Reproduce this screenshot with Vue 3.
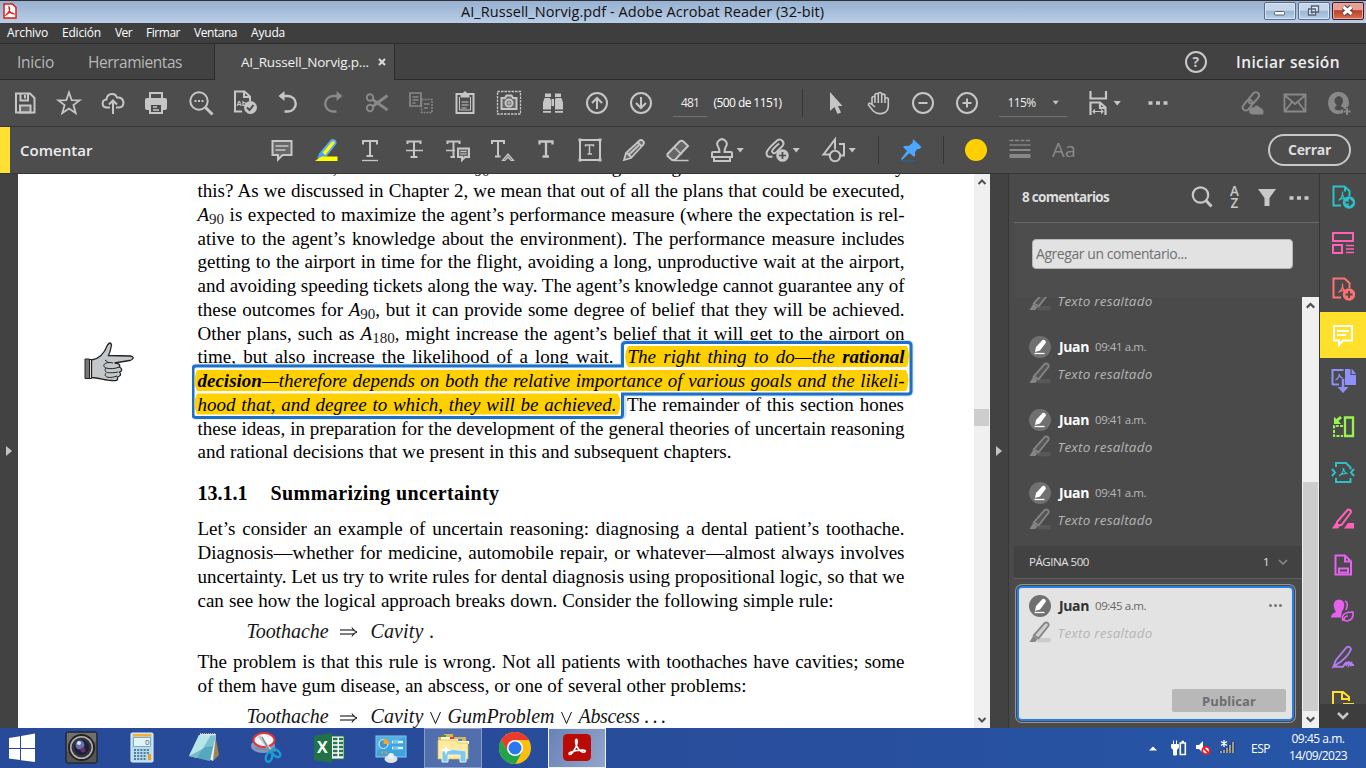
<script setup>
const vFit = {
  mounted(el, { value, modifiers }) {
    if (!value) return
    const text = el.textContent
    const natural = el.getBoundingClientRect().width
    if (modifiers.words) {
      const n = (text.match(/ /g) || []).length
      if (n) el.style.wordSpacing = (value - natural) / n + 'px'
      else el.style.letterSpacing = (value - natural) / text.length + 'px'
    } else {
      el.style.letterSpacing = (value - natural) / text.length + 'px'
    }
  }
}

// Turns left edges into the gaps that separate neighbours in a flex row.
function spaced(items, start = 0) {
  let right = start
  return items.map((it) => {
    const left = it.c !== undefined ? it.c - it.w / 2 : it.x
    const gap = left - right
    right = left + it.w
    return { ...it, gap }
  })
}
const ic = (c, icon, cls = '') => ({ c, w: 28, icon, cls })
const tx = (x, w, text, cls = '') => ({ x, w, text, cls })

const acro = '<path d="M7.500 15.500c3-2 4.500-6 4-9M11.500 9c.5 3.500 2.500 5 4.500 5M8 15c2-1.500 4-2 7-1" stroke-width="1.300"/>'
const hl = '<path d="M6 15 16 3.500c2-2 5 0 3.500 2.500L10.500 18H6Z"/><path class="f" d="M4.500 16 9 19l-2 2.500H1Z"/>'
const icons = {
  save: '<path d="M3 2.500h14l4.500 4.500v14.500H3Z"/><path d="M7.500 3v6.500H15V3M12 4v3.500"/><path class="h" d="M7 14.500h10.500v7H7Z"/>',
  star: '<path d="m12 1.500 2.700 7.700 7.900.2-6.200 4.700 2.300 8L12 17.500l-6.700 4.600 2.300-8-6.200-4.700 7.900-.2Z" stroke-width="1.800"/>',
  cloud: '<path d="M9 16.500H6c-6 0-5.500-8-.500-8C6 2 14 1 16 6.500c8-1 8.500 10 2 10h-3M12 23V10M8 13.500l4-4 4 4"/>',
  print: '<path d="M6 8V2h12V8M6 13v9h12V13Z"/><path class="f" d="M3 7h18q2 0 2 2v8q0 2-2 2h-2v-6H5v6H3q-2 0-2-2V9q0-2 2-2Z"/><path d="M9 16h4m-4 3h6" stroke-width="1.300"/>',
  zoom: '<circle cx="10" cy="10" r="8.700"/><path d="m16.500 16.500 7 7" stroke-width="3"/><path d="M5.500 10h2m1.500 0h2m1.500 0h2" stroke-width="2"/>',
  abc: '<path d="M10 20.500H3V.500h9.500L18 5.500V10M12 1v5h5.500"/><text x="4.500" y="15" font-size="7.500" class="t">Ab</text><circle class="f" cx="18.500" cy="16.500" r="6.500"/><path class="d" d="m15 16.500 2.500 2.500 4-5"/>',
  undo: '<path d="M4 5h8a7.700 7.700 0 0 1 0 15.500H8.500" stroke-width="2.400"/><path class="f" d="M2.500 5 8.500 0v10Z"/>',
  redo: '<path d="M20 5h-8a7.700 7.700 0 0 0 0 15.500H15.500" stroke-width="2.400"/><path class="f" d="m21.500 5-6-5v10Z"/>',
  cut: '<circle cx="5" cy="6.500" r="3.200"/><circle cx="5" cy="17" r="3.200"/><path d="M7.500 8.500 22.500 19M7.500 15.500 22.500 4.500" stroke-width="2.800"/>',
  copy: '<path d="M1 2h11v13H1ZM3.500 6h6m-6 3h6m-6 3h3" stroke-width="1.700"/><path d="M12.500 8.500H23v13H12.500Z" stroke-width="1.500" stroke-dasharray="2 1"/><path d="M15 13h5.500M15 17h4" stroke-width="1.300"/>',
  clip: '<path d="M3.500 3h17v19h-17Z"/><path d="M6.500 6v13h11V6" stroke-width="1"/><path class="f" d="M7.500 2H10q2-3.500 4 0h2.500v4.500h-9Z"/><path d="M8.500 11h7m-7 3h7m-7 3h5" stroke-width="1"/>',
  camera: '<path d="M.500.500h23v22.500H.500Z" stroke-width="1.300" stroke-dasharray="2.500 1"/><path class="h" d="M4.500 7H8l1.500-2.500h5L16 7h3.500v11h-15Z"/><circle cx="12" cy="12" r="3.500"/><path d="M12 10v4m-2-2h4" stroke-width="1"/>',
  find: '<path class="f" d="M4 2.500h6V6H4ZM14 2.500h6V6h-6ZM3.500 7H9l1 2.500v9H2v-7ZM14.500 7h6l1.500 4.500v7h-8v-9ZM10.500 8h2.500v7h-2.500ZM2 20h8v1.700H2ZM14 20h8v1.700h-8Z"/>',
  up: '<circle cx="12" cy="12" r="10"/><path d="M12 18V7m-5 5 5-5 5 5"/>',
  down: '<circle cx="12" cy="12" r="10"/><path d="M12 6v11m-5-5 5 5 5-5"/>',
  pointer: '<path class="f" d="M6 1v19l4.500-4 3 7 3.500-1.500-3-6.500h4.500Z"/>',
  hand: '<path d="M5 14V6.500q1.500-2 3 0V12 3.500q1.700-2 3.300 0V12 2.500q1.700-2 3.400 0V12 4q1.700-1.700 3.300 0v8-4.500q1.700-1.500 3.300 0V15c0 9-11 9-15 5L1.500 14q0-3 3-1L8 16" stroke-width="1.600"/>',
  minus: '<circle cx="12" cy="12" r="10"/><path d="M7.500 12h9"/>',
  plus: '<circle cx="12" cy="12" r="10"/><path d="M7.500 12h9M12 7.500v9"/>',
  arrow: '<path class="f" d="M8.500 10h7.500l-3.750 4.500Z"/>',
  fit: '<path d="M4.500 0v7.500H20V0M4.500 24V11.500H14l5.500 5V24M14 11.500V17h5.500" stroke-width="2.200"/><path d="M7 20.500h10m-8-2-2 2 2 2m6-4 2 2-2 2" stroke-width="1.200"/>',
  dots: '<path class="f" d="M2.500 10.300h4v3.500h-4ZM10 10.300h4v3.500h-4ZM17.500 10.300h4v3.500h-4Z"/>',
  link: '<g transform="rotate(-50 11 11)"><rect x="1" y="8" width="12" height="6.500" rx="3.200"/><rect x="10" y="8" width="13" height="6.500" rx="3.200"/></g><path class="f" d="M14 23.500q-4 0-4-4 1-4 5-3 2-4 6 0 5 2 3 7Z"/>',
  mail: '<path d="M1.500 3.500h21v17h-21ZM2 4.500l10 8.500 10-8.500M2 20l7-9m13 9-7-9" stroke-width="1.800"/>',
  person: '<path class="f" d="M16 22C6 26 1 18 1 11.500A10.500 10.500 0 0 1 22 11q0 3-1 5h-2v2h-3Z"/><path class="e" d="M8 18q-1-2 2-3.500Q6.500 11 8 7.500q4-5 7.500 0 1.500 4-2 7.500l3 1.500v2h-2q-1 2-6 0Z"/><path d="M20 17v7m-3.500-3.500h7"/>',
  help: '<circle cx="12" cy="12" r="10"/><text x="8.500" y="17" font-size="14" class="t">?</text>',
  note: '<path class="h" d="M2.500 3h19v14h-9L8 21.500V17H2.500Z"/><path d="M5.500 8h13m-13 4h10" stroke-width="1.300"/>',
  mark: '<path fill="#ffff00" stroke="#5aa9f5" d="M6 16 17 3c2-2 6 0 4 3L11 19Z"/><path fill="#4d9ff0" stroke="none" d="M3 20 7 13l6 6-4 3Z"/><path fill="#ffff00" stroke="none" d="M8 18.500h15.500V23H1l4-3Z"/>',
  tu: '<path d="M5 6.500V3h14v3.500M12 3v15M8.500 18H15"/><path d="M4 22.500h16" stroke-width="1.300"/>',
  ts: '<path d="M5.500 6V3.500h13V6M12 3.500V19M8.500 19h7"/><path d="M4 12.500h17" stroke-width="1.500"/>',
  tc: '<path d="M1.500 6V3.500h12V6M7.500 3.500V19M4.500 19H9"/><path d="M0 12.500h9" stroke-width="1.500"/><path class="h" d="M12 10.500h11v8.500h-4l-3 3V19h-4Z"/><path d="M14.500 13.500h6m-6 2.500h6" stroke-width="1"/>',
  ti: '<path d="M2 6V3h12V6M8 3v15.500M5 18.500h5.500"/><path class="h" d="m12.500 22.500 5.500-6.500 5.500 6.500h-2.500L18 19l-3 3.500Z" stroke-width="1.200"/>',
  tt: '<path d="M5.500 6.500V3.500h13v3M12 3.500v15M8.500 18.500H15" stroke-width="2.300"/>',
  tb: '<path d="M2 2h20v20H2Z"/><path d="M7.500 8.500V7h8v1.500M11.500 7v9M9.500 16H14" stroke-width="1.500"/><path class="f" d="M.500.500h3v3h-3Zm20 0h3v3h-3Zm-20 20h3v3h-3Zm20 0h3v3h-3Z"/>',
  pencil: '<path class="h" d="M2 22 4 15 17 3q2-2 4 0 2 2 0 4L9 20ZM16 4.500l4 4M5 15l4 4M6 17.500 17 7" stroke-width="1.800"/>',
  eraser: '<path class="h" d="m1.500 16 12-12.500q2-1.500 4 0L22 8l-9 9.500L9 22H6l-4.500-4Z"/><path d="m8.500 9.500 7 7M7 22.500h15.500" stroke-width="1.500"/>',
  stamp: '<path d="M9.500 14q0-3-1.500-5.500a4.700 4.700 0 1 1 8 0q-1.500 2.500-1.500 5.500H21q1 0 1 1v4H2v-4q0-1 1-1ZM4 19v4h16v-4"/>',
  attach: '<path d="M7.500 18.500q-6 1.500-6-3.500 0-3 10-12 3-3 6 0 2.500 3-1 6l-5.500 5.500q-3 2-4-1 0-2 7-8"/><circle class="f" cx="17.500" cy="17.500" r="6.300"/><path class="d" d="M17.500 14v7M14 17.500h7" stroke-width="1.700"/>',
  shapes: '<path d="M8 16.500H1.500L13 1.500v10M17 6h5v11.500h-3"/><circle cx="13" cy="18" r="5.200"/>',
  pin: '<path fill="#4ca7ff" stroke="none" d="M14 1 22.500 9l-2 2h-2L16 14q1 3-1 5l-4.500-4L3 22l-1-1 6-8-4-4q2-2 5.500-1l4-3Z"/><path fill="#385b7e" stroke="none" d="M2 22h14v1.700H2Z"/>',
  color: '<circle cx="12" cy="12" r="11" fill="#ffd000" stroke="none"/>',
  lines: '<path d="M1.500 2.500h21" stroke-width="1.300" stroke-dasharray="4 1.500"/><path d="M1.500 7h21" stroke-width="1.300"/><path d="M1.500 12h21"/><path d="M1.500 18h21" stroke-width="4"/>',
  search: '<circle cx="10.500" cy="10" r="7.700" stroke-width="2.200"/><path d="m16 15.500 5.500 6" stroke-width="3"/>',
  az: '<text x="7" y="11" font-size="13.500" class="t">A</text><text x="7.500" y="23" font-size="13.500" class="t">Z</text>',
  filter: '<path class="f" d="M3 4h18l-6.500 9v8h-5v-8Z"/>',
  hlMini: '<path class="h" d="M5 15 16 2.500c2-2 6 0 4 3L10 18Z" stroke-width="1.900"/><path class="f" d="M4.500 15.500 9 19l-2.500 3H.500Z"/><path d="M9 20h13.500" opacity=".25" stroke-width="4.500"/>',
  pen: '<circle class="bg" cx="12" cy="12" r="11"/><path fill="#fff" stroke="none" d="m7 17 1-5 6.500-7q3-1 3.500 2.500L12 15.500Z"/><path stroke="#fff" d="M6.500 18.500h10" stroke-width="1.300"/>',
  export: '<path d="M10 20.500H2.500V1.500h11L18.500 6v5M14 2v4.500"/>' + acro + '<circle class="f" cx="18" cy="17.500" r="6.200"/><path class="d" d="M14.500 17.500h6.500m-3-3 3 3-3 3"/>',
  organize: '<path d="M2 2h20v8H2ZM2 14h9v8H2Z"/><path d="M15 14.500h8m-8 3.500h8m-8 3.500h8" stroke-width="1.300"/>',
  create: '<path d="M10 20.500H2.500V1.500h11L18.500 6v5"/>' + acro + '<circle class="f" cx="18" cy="17.500" r="6.200"/><path class="d" d="M14.500 17.500h7M18 14v7"/>',
  comment: '<path d="M3 3h18v14.500h-9L8 22v-4.500H3Z"/><path d="M6 8h12M6 12h9"/>',
  combine: '<path d="M1.500 16V1h11M1.500 15.500H8"/><path class="f" d="M14 0h7l4 5v11H14Z"/><path class="d" d="M20 0v5.500h5" stroke-width="1.200"/><path d="M4.500 11q4-2 3.500-6 1 4 4 4" stroke-width="1.200"/><path d="M12 10v9" stroke-width="2.500"/><path class="f" d="M6.500 18h11L12 24Z"/>',
  pages: '<path d="M14 2.500h8v18.500h-8Z" stroke-width="2.300"/><path d="M12 11H3v10h9" stroke-dasharray="3 1.300"/><path class="f" d="m3 2 2.500 2L9 1l2 2-3.500 3L10 9H3Z"/>',
  compress: '<path d="M5 6V2h10l4.500 4.500v2M5 17v4h14.500V17M1 8l3 3.500L1 15m22-7-3 3.500 3 3.500" stroke-width="2"/><path d="M8 15q4-2 4.500-8 .5 5 4 5.500-4-.5-7.500 1.500" stroke-width="1.300"/>',
  edit: hl + '<path class="f" d="m13 21.500 4-5.500h6v5.500Z"/>',
  form: '<path d="M4.500 2.500H14l6 6V21.500H4.500ZM14 3v5.500h5"/><path d="M8 15.500h9v4H8Z"/>',
  send: '<path class="f" d="M0 18.500q0-4 5-5.500-4-6-1-11 4-3 8 0 3 5-1 10.500l-1 6Z"/><path d="M14 2q4 2 1 9M12 22q-3-9 10-9 1 8-6 9-3 0-3-2 1-3 4-3" stroke-width="1.600"/>',
  sign: '<path d="m5 15 10.500-12.500q3-2 4.500 1.500-2 6-10 12.500L2.500 21.500ZM2.500 21.700H12q5-8 3-1 4-7 3-1 4-5 2 .5l3-.5" stroke-width="1.900"/>',
  more: '<path d="M12 22H2V1h10l6 5v4M11 1v7h6M12 13h11"/>'
}

const menu = spaced([
  tx(7, 41, 'Archivo'), tx(62, 39, 'Edición'), tx(115, 17, 'Ver'),
  tx(146, 34, 'Firmar'), tx(194, 43, 'Ventana'), tx(251, 34, 'Ayuda')
])
const tools = spaced([
  ic(25, 'save'), ic(69, 'star'), ic(113, 'cloud'), ic(156, 'print'), ic(201, 'zoom'), ic(244, 'abc'),
  ic(288, 'undo'), ic(332.500, 'redo', 'off'), ic(377, 'cut', 'off'), ic(420.500, 'copy', 'off'),
  ic(464.500, 'clip'), ic(509, 'camera'), ic(553, 'find'), ic(597, 'up'), ic(641, 'down'),
  tx(673, 34, '481', 'field'), tx(713.500, 68, '(500 de 1151)', 'label'), { x: 802, w: 1, sep: true },
  ic(835.500, 'pointer'), ic(879, 'hand'), ic(922.500, 'minus'), ic(966.500, 'plus'),
  tx(999, 45, '115%', 'field'), { c: 1055.500, w: 23, icon: 'arrow', cls: 'under' },
  ic(1098, 'fit'), { c: 1117, w: 10, icon: 'arrow', cls: 'mini' }, ic(1158, 'dots'),
  ic(1250.500, 'link', 'off'), ic(1295, 'mail', 'off'), ic(1339, 'person', 'off')
])
const review = spaced([
  { x: 0, w: 10, bar: true }, tx(20, 72.500, 'Comentar', 'name'), ic(282, 'note'), ic(326, 'mark'), ic(370, 'tu'), ic(414, 'ts'),
  ic(458, 'tc'), ic(502, 'ti'), ic(546, 'tt'), ic(590, 'tb'), ic(634, 'pencil'), ic(678, 'eraser'),
  ic(722, 'stamp'), { c: 739.500, w: 10, icon: 'arrow', cls: 'mini' },
  ic(777, 'attach'), { c: 795.500, w: 10, icon: 'arrow', cls: 'mini' },
  ic(833.500, 'shapes'), { c: 851.500, w: 10, icon: 'arrow', cls: 'mini' },
  { x: 878, w: 1, sep: true }, ic(911, 'pin'), { x: 943, w: 1, sep: true },
  ic(976, 'color'), ic(1019.500, 'lines', 'off'), tx(1052, 24, 'Aa', 'aa'), { x: 1268, w: 83, text: 'Cerrar', cls: 'close' }
])
const inner = { field: 18, close: 43 }
const fitOf = (it) => (it.text === '115%' ? 28 : inner[it.cls] || it.w)

const A = (n) => `<i>A</i><sub>${n}</sub>`
const L = (html, w = 707) => [{ html, w, gap: 0 }]
const para1 = [
  [{ html: 'it will do. Nonetheless,', w: 140, gap: 0 }, { html: 'it seems to us that ' + A(90), w: 145, gap: 7 }, { html: 'is in fact the right thing to do. What do we mean by', w: 408, gap: 7 }],
  L('this? As we discussed in Chapter 2, we mean that out of all the plans that could be executed,'),
  L(A(90) + ' is expected to maximize the agent’s performance measure (where the expectation is rel-'),
  L('ative to the agent’s knowledge about the environment). The performance measure includes'),
  L('getting to the airport in time for the flight, avoiding a long, unproductive wait at the airport,'),
  L('and avoiding speeding tickets along the way. The agent’s knowledge cannot guarantee any of'),
  L('these outcomes for ' + A(90) + ', but it can provide some degree of belief that they will be achieved.'),
  L('Other plans, such as ' + A(180) + ', might increase the agent’s belief that it will get to the airport on'),
  [{ html: 'time, but also increase the likelihood of a long wait.', w: 416, gap: 0 }, { html: 'The right thing to do—the <b>rational</b>', w: 277, gap: 14, hot: true }],
  [{ html: '<b>decision</b>—therefore depends on both the relative importance of various goals and the likeli-', w: 707, gap: 0, hot: true }],
  [{ html: 'hood that, and degree to which, they will be achieved.', w: 419, gap: 0, hot: true }, { html: 'The remainder of this section hones', w: 277, gap: 10.500 }],
  L('these ideas, in preparation for the development of the general theories of uncertain reasoning'),
  L('and rational decisions that we present in this and subsequent chapters.', 534)
]
const para2 = [
  L('Let’s consider an example of uncertain reasoning: diagnosing a dental patient’s toothache.'),
  L('Diagnosis—whether for medicine, automobile repair, or whatever—almost always involves'),
  L('uncertainty. Let us try to write rules for dental diagnosis using propositional logic, so that we'),
  L('can see how the logical approach breaks down. Consider the following simple rule:', 636)
]
const para3 = [
  L('The problem is that this rule is wrong. Not all patients with toothaches have cavities; some'),
  L('of them have gum disease, an abscess, or one of several other problems:', 549)
]
const formula1 = spaced([tx(247, 82, 'Toothache'), { x: 340, w: 18, arrow: true }, tx(371, 53, 'Cavity'), tx(430, 5, '.')], 198)
const formula2 = spaced([
  tx(247, 82, 'Toothache'), { x: 340, w: 18, arrow: true }, tx(371, 53, 'Cavity'), { x: 430, w: 11, or: true },
  tx(448, 107, 'GumProblem'), { x: 561, w: 11, or: true }, tx(579, 61, 'Abscess'), tx(645, 21, '. . .')
], 198)

const notes = [{ id: 0, partial: true }, { id: 1 }, { id: 2 }, { id: 3 }]
const rail = [
  ['export', '#2cc1c7'], ['organize', '#ff61b6'], ['create', '#ff7272'], ['comment', '#ffffff'], ['combine', '#9090fa'],
  ['pages', '#97f34d'], ['compress', '#2cc1c7'], ['edit', '#ff61b6'], ['form', '#e561ee'], ['send', '#e561ee'],
  ['sign', '#b17cf0'], ['more', '#ffe12d']
]

const tasks = {
  win: '<path fill="#fff" d="M1 8 12 6.200V18H1Zm12-2 14-2.500v14.500H13ZM1 19h11v11L1 28.500Zm12 0h14v13l-14-1.800Z"/>',
  cam: '<rect x="1" y="2" width="31" height="31" rx="2" fill="#555" stroke="#191919"/><path fill="#999" opacity=".4" d="M2 3h29v9L2 22Z"/><circle cx="16.500" cy="17.500" r="13.500" fill="#242424"/><circle cx="16.500" cy="17.500" r="11.500" fill="#b4b5b8"/><circle cx="16.500" cy="17.500" r="10" fill="#34343a"/><circle cx="16.500" cy="17.500" r="7.500" fill="#201e3c"/><circle cx="15" cy="15" r="4.500" fill="#6672aa"/><circle cx="18" cy="20" r="2.500" fill="#64316b"/><circle cx="14" cy="13" r="2" fill="#dbe4ff"/>',
  calc: '<rect x="6" y="3" width="22" height="29" rx="1" fill="#b9dced" stroke="#e1f2fc"/><path fill="#f7ae31" d="M8 4h18v2.500H8Z"/><path fill="#e2f3f7" stroke="#7bacbd" d="M8.500 7.500h17v9h-17Z"/><text x="20" y="15" font-size="8" fill="#345d83">0</text><path stroke="#537a9c" stroke-width="2" stroke-dasharray="2 1.200" d="M9 20h16M9 23h16M9 26h12M9 29h12"/><path fill="#f09b1c" d="M23 24h3v6h-3Z"/>',
  pad: '<path fill="#9d844f" d="m28 4 4 21-6 6Z"/><path fill="#e9f0f1" d="M13 4h16l-3 27-6-3Z"/><path fill="#78c2d6" d="M12 5h17l-6 26-21-5Z"/><path fill="#b8e6e8" d="M12 5h12L10 28l-8-2Z"/><path fill="#3c91ad" d="m19 17 7-1-3 15-21-5 6-3Z" opacity=".55"/><path stroke="#d7dfe2" stroke-width="2.500" stroke-dasharray="1 1" d="M13 4.500h16"/>',
  snip: '<ellipse cx="13" cy="16" rx="12" ry="7" fill="#8495c6"/><ellipse cx="14" cy="10" rx="10.500" ry="7" fill="#f8f8f8" stroke="#e33339" stroke-width="2"/><path stroke="#c1cad1" stroke-width="3" d="m9 6 13 16"/><path stroke="#7e8994" stroke-width="1.500" d="m12 7 8 15m6-1-21-3"/><g fill="none" stroke="#199ed3" stroke-width="2.500"><ellipse cx="19" cy="27" rx="3" ry="5" transform="rotate(15 19 27)"/><ellipse cx="26" cy="23" rx="3" ry="5" transform="rotate(-50 26 23)"/></g>',
  excel: '<path fill="#fff" stroke="#1f7145" d="M17 6h14v23H17Z"/><path stroke="#23794b" stroke-width="2.500" stroke-dasharray="4.500 1.500" d="M20 9h10M20 13h10M20 17h10M20 21h10M20 25h10"/><path fill="#207347" d="m1 6 18-3v30L1 30Z"/><text x="4" y="23" font-size="16" font-weight="700" fill="#fff">X</text>',
  panel: '<rect x="2" y="6" width="30" height="21" fill="#3ba3df" stroke="#8ac8ea"/><path fill="#68c1ee" opacity=".5" d="M3 7h28L3 21Z"/><circle cx="9.500" cy="14" r="4.500" fill="#4095c9" stroke="#e4f6ff"/><path fill="#ffa126" d="M9.500 14V8.500a5.500 5.500 0 0 1 5.500 5.500Z"/><path stroke="#e9faff" stroke-width="2.500" d="M18 12h11M18 18h11"/><path stroke="#2786be" stroke-width="1" d="M19 12h5m-5 6h5"/><path stroke="#ff931e" stroke-width="2" d="M7 22.500h2m2 0h2"/><ellipse cx="17" cy="29" rx="6.500" ry="4" fill="#dde3e7"/><circle cx="17" cy="26" r="3" fill="#eee"/>',
  folder: '<path fill="#dbb455" d="M2 7h6V4h9v3h13v21H2Z"/><path fill="#fff7ce" d="M5 7h12v3H5Zm8 2h12v3H13Zm9 2h11v3H22Z"/><path fill="#29a340" d="M6 5h4v2H6Z"/><path fill="#d83e31" d="M14 7h4v2h-4Z"/><path fill="#2b93de" d="M22 9h4v2h-4Z"/><path fill="#ffeb9b" stroke="#d4b860" stroke-width=".7" d="M2 10h18l2 3h10v16H2Z"/><path fill="#84c8e8" stroke="#e1f5fd" d="M6 32V21q11-3 24 0v11h-6v-7H12v7Z"/><path fill="#fff" d="m10 14 1 4.500 4 2-4 1-1 4-1-4-5-1 5-2Z"/>',
  chrome: '<circle cx="17" cy="18" r="16" fill="#fbbf11"/><path fill="#e83b2e" d="M3.200 10A16 16 0 0 1 30.800 10H17l-7 12Z"/><path fill="#25a34a" d="M3.200 10A16 16 0 0 0 17.500 34L24 22H10Z"/><circle cx="17" cy="18" r="8" fill="#fff"/><circle cx="17" cy="18" r="6.500" fill="#2879ee"/>',
  adobe: '<rect x="3" y="4" width="28" height="27" rx="4.500" fill="#b90b03"/><path fill="none" stroke="#fff" stroke-width="1.600" d="M9.500 24.500c-2.500-2.500 6-4 13-4.500 5 0 2.500 3.500-1 1.500-4.500-3-6-7.500-6-10.500.5-3.500 3-1 1 4.500-1.500 4-5 9.500-7 9Z"/>'
}
const pinned = spaced([
  { c: 25, w: 34, k: 'win' }, { c: 81.500, w: 34, k: 'cam' }, { c: 142, w: 34, k: 'calc' }, { c: 204, w: 34, k: 'pad' },
  { c: 267, w: 34, k: 'snip' }, { c: 330, w: 34, k: 'excel' }, { c: 391, w: 34, k: 'panel' },
  { c: 453, w: 58, k: 'folder', cls: 'open' }, { c: 515, w: 34, k: 'chrome' }, { c: 577, w: 58, k: 'adobe', cls: 'open current' }
])
</script>

<template>
  <div class="desktop">
    <header class="title">
      <svg class="logo" viewBox="0 0 14 16"><path d="M1 1h8.500L13 4.500V15H1Z" fill="#fff" stroke="#e21b12" stroke-width="1.500" /><path d="M3 12c2-3 5-3 8-1-4 0-5-4-5-7 2 2-1 7-3 8Z" fill="none" stroke="#e21b12" stroke-width="1.200" /></svg>
      <span v-fit="363" class="caption">AI_Russell_Norvig.pdf - Adobe Acrobat Reader (32-bit)</span>
      <div class="window-buttons">
        <div class="wb"><svg viewBox="0 0 30 16"><rect x="9.500" y="8.500" width="10" height="3.500" rx="1" fill="#fff" stroke="#53617b" /></svg></div>
        <div class="wb"><svg viewBox="0 0 30 16"><path d="M12.500 3h7v6h-7Z M9.500 6h7v6h-7Z" fill="#e9eff7" stroke="#53617b" stroke-width="1.300" /><path d="M12 8.500h2V10h-2Z" fill="none" stroke="#53617b" /></svg></div>
        <div class="wb red"><svg viewBox="0 0 30 16"><path d="m10.500 4 8 7m0-7-8 7" stroke="#533743" stroke-width="5" /><path d="m10.500 4 8 7m0-7-8 7" stroke="#fff" stroke-width="3" /></svg></div>
      </div>
    </header>

    <nav class="menu"><span v-for="m in menu" :key="m.text" v-fit="m.w" :style="{ marginLeft: m.gap + 'px' }">{{ m.text }}</span></nav>

    <div class="tabs">
      <div class="tab home"><span v-fit="37">Inicio</span></div>
      <div class="tab kit"><span v-fit="94">Herramientas</span></div>
      <div class="tab active"><span v-fit="128">AI_Russell_Norvig.p...</span><svg viewBox="0 0 8 8"><path d="m1 1 6 6m0-6-6 6" /></svg></div>
      <div class="account">
        <svg class="icon" viewBox="-2 -2 28 28" v-html="icons.help"></svg>
        <span v-fit="104">Iniciar sesión</span>
      </div>
    </div>

    <div v-for="(row, r) in [tools, review]" :key="r" class="tools" :class="{ review: r }">
      <template v-for="(it, i) in row" :key="i">
        <svg v-if="it.icon" class="icon" :class="it.cls" viewBox="-2 -2 28 28" :style="{ marginLeft: it.gap + 'px', width: it.w + 'px' }" v-html="icons[it.icon]"></svg>
        <i v-else-if="it.sep" class="sep" :style="{ marginLeft: it.gap + 'px' }"></i>
        <i v-else-if="it.bar" class="bar"></i>
        <div v-else class="text" :class="it.cls" :style="{ marginLeft: it.gap + 'px', width: it.w + 'px' }"><span v-fit="fitOf(it)">{{ it.text }}</span></div>
      </template>
    </div>

    <main class="work">
      <aside class="gutter left"><i class="tri"></i></aside>
      <section class="page">
        <svg class="fist" viewBox="0 0 50 42">
          <path d="M5.500 17.500h2v19h-2Z" fill="#fff" stroke="#222" /><path d="M1 17h4.500v19.500H1Z" fill="#777" stroke="#222" />
          <path d="M7.500 18c8-1 13-7 16-15q3-4 4 0-1 6-3 10.500l22 .5q4 1 2 3-1 1.500-3 1.500l-15 2.500c4 0 6 2 5 4 3 2 3 4 0 5 2 3 1 4-2 5 1 4-2 4-6 3.500-6 0-13-3-20-3Z" fill="#c5c8cb" stroke="#222" stroke-width="1.300" />
          <path d="M29 21c-8-2-12 3-7 5 4 1 9 1 13-1M22 26c-3 4 1 6 12 4M22 31c-3 4 3 6 11 3M21 18l4 3" fill="none" stroke="#222" />
        </svg>
        <svg class="selection" viewBox="0 0 730 84">
          <path class="halo" d="M434 3.500h282q3 0 3 3V52q0 3-3 3H432v20q0 3-3 3H4q-3 0-3-3V30q0-3 3-3h426.500V6.500q0-3 3.500-3Z" />
          <path class="edge" d="M434 3.500h282q3 0 3 3V52q0 3-3 3H430.500v20.500q0 3-3 3H4q-3 0-3-3V30q0-3 3-3h426.500V6.500q0-3 3.500-3Z" />
          <path class="ink" d="M436 7h279q4 10 0 21H436q-6-10 0-21ZM5 31h709q5 10 0 21H5q-5-10 0-21ZM5 54.500h421q5 10 0 21H5q-5-10 0-21Z" />
        </svg>
        <div class="body">
          <p v-for="(l, i) in para1" :key="i"><span v-for="(s, j) in l" :key="j" v-fit.words="s.w" :class="{ hot: s.hot }" :style="{ marginLeft: s.gap + 'px' }" v-html="s.html"></span></p>
          <h2><span v-fit="50">13.1.1</span><span v-fit="229">Summarizing uncertainty</span></h2>
          <p v-for="(l, i) in para2" :key="i"><span v-for="(s, j) in l" :key="j" v-fit.words="s.w" v-html="s.html"></span></p>
          <template v-for="(f, k) in [formula1, formula2]" :key="k">
            <div class="formula">
              <template v-for="(s, j) in f" :key="j">
                <svg v-if="s.arrow" class="implies" viewBox="0 0 18 10" :style="{ marginLeft: s.gap + 'px' }"><path d="M0 3h14.500M0 7h14.500M12 .500Q13 4 17 5q-4 1-5 4.500" /></svg>
                <svg v-else-if="s.or" class="or" viewBox="0 0 11 12" :style="{ marginLeft: s.gap + 'px' }"><path d="m.500 0 5 11.500 5-11.500" /></svg>
                <span v-else v-fit="s.w" :style="{ marginLeft: s.gap + 'px' }">{{ s.text }}</span>
              </template>
            </div>
            <template v-if="k === 0">
              <p v-for="(l, i) in para3" :key="i"><span v-for="(s, j) in l" :key="j" v-fit.words="s.w" v-html="s.html"></span></p>
            </template>
          </template>
        </div>
      </section>
      <div class="scroll doc-scroll">
        <svg viewBox="0 0 16 16"><path d="m4.500 10 3.500-3.500 3.500 3.500" /></svg>
        <i></i>
        <svg viewBox="0 0 16 16"><path d="m4.500 6 3.500 3.500L11.500 6" /></svg>
      </div>
      <aside class="gutter right"><i class="tri"></i></aside>

      <section class="panel">
        <div class="panel-head">
          <strong v-fit="87">8 comentarios</strong>
          <svg v-for="n in ['search', 'az', 'filter', 'dots']" :key="n" class="icon" :class="n" viewBox="-2 -2 28 28" v-html="icons[n]"></svg>
        </div>
        <div class="add"><div class="input"><span v-fit="151">Agregar un comentario...</span></div></div>
        <div class="list">
          <div class="threads">
            <div class="stack">
              <article v-for="n in notes" :key="n.id">
                <div v-if="!n.partial" class="who"><svg class="icon" viewBox="0 0 24 24" v-html="icons.pen"></svg><b v-fit="30">Juan</b><time v-fit="51">09:41 a.m.</time></div>
                <div v-else class="who"></div>
                <div class="what"><svg class="icon" viewBox="0 0 24 24" v-html="icons.hlMini"></svg><em v-fit="95">Texto resaltado</em></div>
              </article>
            </div>
            <div class="group"><span v-fit="60">PÁGINA 500</span><span class="count">1</span><svg viewBox="0 0 10 8"><path d="m1 2 4 4 4-4" /></svg></div>
            <div class="card">
              <div class="who"><svg class="icon" viewBox="0 0 24 24" v-html="icons.pen"></svg><b v-fit="30">Juan</b><time v-fit="51">09:45 a.m.</time><span class="kebab"></span></div>
              <div class="what"><svg class="icon" viewBox="0 0 24 24" v-html="icons.hlMini"></svg><em v-fit="95">Texto resaltado</em></div>
              <div class="post"><span v-fit="54">Publicar</span></div>
            </div>
          </div>
          <div class="scroll list-scroll">
            <svg viewBox="0 0 16 16"><path d="m4.500 10 3.500-3.500 3.500 3.500" /></svg>
            <i></i>
            <svg viewBox="0 0 16 16"><path d="m4.500 6 3.500 3.500L11.500 6" /></svg>
          </div>
        </div>
      </section>

      <aside class="rail">
        <div class="rail-list">
          <div v-for="[k, color] in rail" :key="k" class="cell" :class="{ picked: k === 'comment' }" :style="{ color }"><svg class="icon" viewBox="-2 -2 28 28" v-html="icons[k]"></svg></div>
        </div>
        <div class="rail-more"><svg viewBox="0 0 14 10"><path d="m2 2 5 5 5-5" /></svg></div>
      </aside>
    </main>

    <footer class="taskbar">
      <div v-for="p in pinned" :key="p.k" class="task" :class="p.cls" :style="{ marginLeft: p.gap + 'px', width: p.w + 'px' }"><svg viewBox="0 0 34 36" v-html="tasks[p.k]"></svg></div>
      <div class="tray">
        <svg class="peek" viewBox="0 0 8 5"><path d="m0 4.500 4-4 4 4Z" fill="#fff" /></svg>
        <svg class="battery" viewBox="0 0 16 18"><path d="M2.500 1.500v4m3-4v4M.500 5.500h7v3q0 1.500-2 1.500v6h-3v-6q-2 0-2-1.500Z" fill="#fff" stroke="#fff" /><path d="M9.300 4h5v11.500h-5ZM10.500 2.500h2.500" fill="#294f99" stroke="#fff" stroke-width="1.600" /></svg>
        <svg class="sound" viewBox="0 0 16 18"><path d="M1 6h3l4-4v12l-4-4H1Z" fill="#fff" /><circle cx="11" cy="11.500" r="3.700" fill="#fff" stroke="#e51e25" stroke-width="1.800" /><path d="m8.500 9 5 5" stroke="#e51e25" stroke-width="1.800" /></svg>
        <svg class="net" viewBox="0 0 18 18"><path d="M2 14v-2m3 2v-3m3 3V9m3 5V6m3 8V3" stroke="#222b41" stroke-width="3.500" /><path d="M2 14v-2m3 2v-3m3 3V9m3 5V6m3 8V3" stroke="#9b9b98" stroke-width="2.200" /><path d="M5 1v7M2 2.500l6 4m0-4-6 4" stroke="#fff" stroke-width="1.300" /></svg>
        <span v-fit="19" class="lang">ESP</span>
        <div class="clock"><span v-fit="53">09:45 a.m.</span><span v-fit="58">14/09/2023</span></div>
      </div>
    </footer>
  </div>
</template>

<style>
html, body { overflow: hidden; }
.icon { fill: none; stroke: currentColor; stroke-width: 2; flex: none; overflow: visible; }
.icon .f { fill: currentColor; stroke: none; }
.icon .h { fill: currentColor; fill-opacity: .22; }
.icon .t { fill: currentColor; stroke: none; font-family: "Open Sans", sans-serif; font-weight: 700; }
.icon .d { stroke: #4b4b4b; }
.icon .e { fill: #4b4b4b; stroke: none; }
.icon .bg { fill: #707070; stroke: none; }
.az .t { font-weight: 600; }
.body sub { font-size: 15px; line-height: 0; vertical-align: -3px; color: #222; }
.task text { font-family: "Open Sans", sans-serif; }
</style>

<style scoped>
.desktop { width: 1366px; height: 768px; display: flex; flex-direction: column; overflow: hidden; font-family: "Open Sans", "Noto Sans", sans-serif; background: #4d4d4d; }
span, b, strong, em, time { white-space: nowrap; }
svg { display: block; flex: none; }
.title { height: 23px; box-sizing: border-box; border-top: 1px solid #303036; background: linear-gradient(#97b1d1, #b9cde6); display: flex; align-items: center; }
.logo { width: 14px; height: 16px; margin-left: 3px; margin-top: -2px; }
.caption { margin-left: 444px; font-size: 14.500px; line-height: 20px; color: #101010; }
.window-buttons { margin-left: auto; display: flex; gap: 2px; padding-right: 2px; margin-top: -2px; }
.wb { width: 32px; height: 18px; box-sizing: border-box; border: 1px solid #566d8c; border-radius: 2px; background: linear-gradient(#c6d6e9 0 46%, #9cb5d2 50%, #b8cee5); box-shadow: inset 0 0 0 1px #dae5f1; }
.wb svg { width: 30px; height: 16px; }
.red { border-color: #4a1721; background: linear-gradient(#e5a194 0 42%, #bd4027 48%, #d37456); box-shadow: inset 0 0 0 1px #e6aaa0; }
.menu { height: 21px; box-sizing: border-box; border-bottom: 1px solid #2b2b2b; background: #3e3e3e; color: #fff; display: flex; align-items: center; font-size: 12px; line-height: 20px; }
.tabs { height: 36px; box-sizing: border-box; background: #424242; box-shadow: inset 0 -1px #2b2b2b; display: flex; color: #b8b8b8; font-size: 15.500px; }
.tab { display: flex; align-items: center; box-sizing: border-box; }
.home { width: 88px; padding-left: 17px; }
.kit { width: 126px; }
.active { width: 181px; background: #4d4d4d; border: solid #2b2b2b; border-width: 0 1px; padding-left: 26px; font-size: 13.500px; color: #f1f1f1; }
.active svg { width: 8px; height: 8px; margin-left: 9px; stroke: #ddd; stroke-width: 2; }
.account { margin-left: auto; display: flex; align-items: center; color: #eee; font-weight: 600; padding-right: 26px; padding-bottom: 1px; }
.account .icon { width: 28px; height: 28px; margin-right: 26.500px; color: #c9c9c9; }
.tools { height: 47px; box-sizing: border-box; border-bottom: 1px solid #363636; display: flex; align-items: center; background: #4d4d4d; color: #c6c6c6; }
.tools .icon { height: 28px; }
.tools .off { color: #888; }
.sep { width: 1px; height: 28px; background: #363636; }
.bar { width: 10px; height: 46px; background: #ffe033; }
.text { display: flex; justify-content: center; align-items: center; flex: none; }
.field { height: 28px; box-sizing: border-box; border-bottom: 1px solid #707070; font-size: 12px; color: #eee; }
.label { font-size: 12px; color: #fff; padding-bottom: 1px; }
.under { border-bottom: 1px solid #707070; box-sizing: border-box; }
.name { font-size: 15px; font-weight: 600; color: #eee; justify-content: flex-start; }
.aa { font-size: 20px; color: #888; padding-bottom: 2px; }
.close { height: 32px; box-sizing: border-box; border: 2px solid #c8c8c8; border-radius: 16px; font-size: 14px; font-weight: 700; color: #ddd; padding-bottom: 1px; }
.tools .mini { overflow: hidden; transform: scale(2.700); }
.work { height: 554px; display: flex; }
.gutter { width: 18px; background: #424242; display: flex; align-items: center; justify-content: center; flex: none; }
.right { width: 19px; box-sizing: border-box; border-right: 1px solid #363636; }
.tri { width: 0; height: 0; border: 5.500px solid transparent; border-left: 6px solid #c4c4c4; border-right: 0; }
.page { width: 956px; background: #fff; position: relative; overflow: hidden; flex: none; }
.body { margin-left: 179.500px; margin-top: -18.700px; font-family: "Liberation Serif", serif; font-size: 19px; color: #000; }
.body p { margin: 0; height: 23.760px; line-height: 23.760px; display: flex; white-space: nowrap; }
.body .hot { position: relative; z-index: 2; font-style: italic; }
h2 { margin: 16.800px 0 12.400px; height: 24px; line-height: 24px; font-size: 20px; display: flex; gap: 23px; }
.formula { height: 24px; line-height: 24px; margin: 6.700px 0 7.200px; display: flex; align-items: center; font-style: italic; font-size: 20px; color: #151515; }
.or { width: 11px; height: 12px; fill: none; stroke: #111; stroke-width: 1; margin-top: 3px; }
.implies { width: 18px; height: 10px; fill: none; stroke: #000; stroke-width: 1; margin-top: 3px; }
.fist { position: absolute; left: 65.500px; top: 168px; width: 50px; height: 42px; }
.selection { position: absolute; left: 173.500px; top: 165px; width: 730px; height: 84px; z-index: 1; }
.halo { fill: none; stroke: #cfdff2; stroke-width: 5; }
.edge { fill: #fff; stroke: #1b70c8; stroke-width: 3; }
.ink { fill: #ffd000; }
.scroll { background: #f0f0f0; display: flex; flex-direction: column; flex: none; }
.scroll svg { width: 16px; height: 16px; fill: none; stroke: #505050; stroke-width: 2; }
.scroll i { background: #cdcdcd; }
.doc-scroll { width: 16px; }
.doc-scroll i { height: 17px; margin: 219px 0 286px; width: 15px; }
.panel { width: 310px; display: flex; flex-direction: column; background: #4a4a4a; flex: none; }
.panel-head { height: 49px; box-sizing: border-box; margin-left: 5px; border-bottom: 1px solid #686868; display: flex; align-items: center; padding: 0 6px 3px 8px; color: #c8c8c8; }
.panel-head strong { font-size: 13.500px; font-weight: 700; color: #dedede; margin-right: 79px; }
.panel-head .icon { width: 28px; height: 28px; margin-right: 4.500px; }
.panel-head .dots { margin: 2px 0 0 -1px; }
.add { height: 74px; margin-left: 5px; box-sizing: border-box; padding: 16px 0 0 18px; background: #4d4d4d; }
.input { width: 261px; height: 30px; box-sizing: border-box; background: #e2e2e2; border: 1px solid #b6b6b6; border-radius: 4px; color: #707070; font-size: 14px; line-height: 28px; padding-left: 3px; }
.list { height: 431px; display: flex; overflow: hidden; }
.threads { width: 293px; box-sizing: border-box; padding-left: 5px; display: flex; flex-direction: column; }
.stack { height: 249px; overflow: hidden; display: flex; flex-direction: column; justify-content: flex-end; flex: none; }
article { height: 73px; flex: none; padding-left: 15px; }
article:last-child { height: 67px; }
.who, .what { display: flex; align-items: center; height: 27px; font-size: 11.500px; color: #b8b8b8; }
.who .icon { width: 24px; height: 24px; margin: 0 7px 0 -1px; }
.who b { font-size: 14px; color: #fff; margin-right: 6px; }
.what .icon { width: 23px; height: 23px; margin-right: 5.500px; color: #858585; }
.what em { font-size: 13.500px; color: #b5b5b5; }
.group { height: 33px; flex: none; box-sizing: border-box; background: #424242; border-bottom: 1px solid #5e5e5e; display: flex; align-items: center; padding: 0 0 1px 15px; color: #e3e3e3; font-size: 11.500px; }
.count { margin-left: 174px; }
.group svg { width: 10px; height: 8px; margin-left: 8px; fill: none; stroke: #8c8c8c; stroke-width: 1.500; }
.card { width: 277px; height: 135px; flex: none; box-sizing: border-box; margin: 7px 0 0 3px; border: 2px solid #267fe8; border-radius: 5px; background: #e3e3e3; padding: 4px 0 0 10px; position: relative; box-shadow: 0 0 0 1px #464646, 0 0 0 2px #969696; display: flex; flex-direction: column; }
.card .who { color: #666; }
.card b { color: #303030; }
.card em { color: #b5b5b5; }
.kebab { width: 3px; height: 3px; background: #777; margin-left: 128px; border-radius: 50%; box-shadow: -5px 0 #777, 5px 0 #777; }
.post { width: 114px; height: 23px; border-radius: 2px; margin: auto 6px 7px auto; background: #b8b8b8; color: #6e6e6e; font-size: 13px; font-weight: 700; display: flex; align-items: center; justify-content: center; }
.list-scroll { width: 17px; }
.list-scroll svg { width: 17px; height: 17px; }
.list-scroll i { height: 229px; width: 15px; margin: 168px 0 0 1px; }
.rail { width: 47px; box-sizing: border-box; border-left: 1px solid #363636; background: #4a4a4a; display: flex; flex-direction: column; }
.rail-list { height: 530px; overflow: hidden; }
.cell { height: 46px; display: flex; align-items: center; justify-content: center; }
.cell .icon { width: 28px; height: 28px; }
.picked { background: #ffe02d; }
.rail-more { height: 24px; background: #3d3d3d; display: flex; align-items: center; justify-content: center; }
.rail-more svg { width: 14px; height: 10px; fill: none; stroke: #c8c8c8; stroke-width: 2.500; }
.taskbar { height: 40px; background: linear-gradient(90deg, #274a99, #284d9b 50%, #2756a8); display: flex; }
.task { height: 40px; box-sizing: border-box; display: flex; justify-content: center; padding-top: 2px; flex: none; }
.task svg { width: 34px; height: 36px; }
.open { background: #526fad; border: 1px solid #879bc4; padding-top: 1px; }
.current { background: linear-gradient(120deg, #6982b8, #94a5ca); border-color: #eef3fb; }
.tray { display: flex; align-items: center; margin-left: auto; color: #fff; font-size: 12px; padding-right: 19px; }
.peek { width: 8px; height: 5px; margin-right: 14px; }
.battery { width: 16px; height: 18px; margin-right: 8px; }
.sound { width: 16px; height: 18px; margin-right: 8px; }
.net { width: 18px; height: 18px; margin-right: 14px; }
.lang { margin-right: 19px; }
.clock { display: flex; flex-direction: column; align-items: center; line-height: 16.500px; height: 34px; width: 58px; }
</style>
